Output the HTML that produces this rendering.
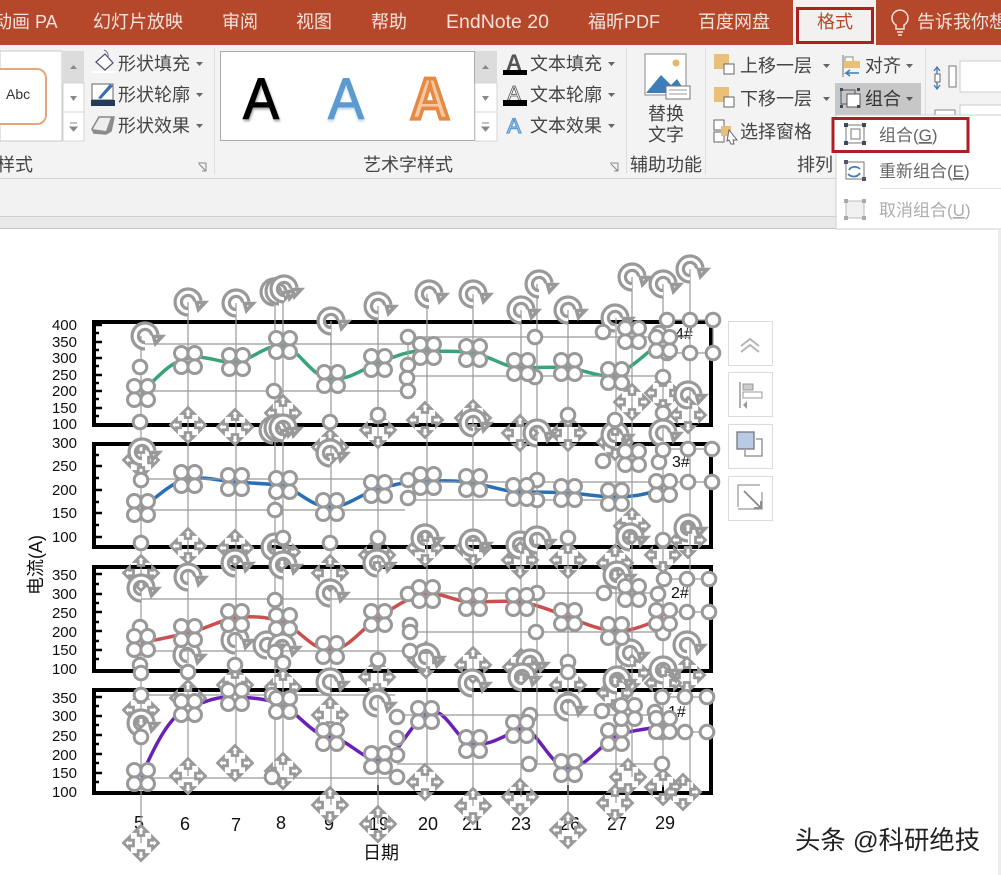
<!DOCTYPE html>
<html lang="zh">
<head>
<meta charset="utf-8">
<title>PowerPoint 组合</title>
<style>
html,body{margin:0;padding:0;background:#fff;width:1001px;height:875px;overflow:hidden}
svg{display:block}
text{font-family:"Liberation Sans","Noto Sans CJK SC",sans-serif}
.t{font-size:18px;fill:#f3e2dc}
.r{font-size:18px;fill:#444}
.n{font-size:15px;fill:#111;text-anchor:end}
.x{font-size:18px;fill:#111;text-anchor:middle}
.m{font-size:17px;fill:#666}
</style>
</head>
<body>
<svg width="1001" height="875" viewBox="0 0 1001 875" xmlns="http://www.w3.org/2000/svg">
<defs>
<circle id="c" r="6.8" fill="#fff" stroke="#999" stroke-width="3"/>
<g id="q"><use href="#c" x="-6.7" y="-6.7"/><use href="#c" x="6.7" y="-6.7"/><use href="#c" x="-6.7" y="6.7"/><use href="#c" x="6.7" y="6.7"/></g>
<g id="r">
<path d="M0 9.800A9.800 9.800 0 1 1 9.800-1" fill="none" stroke="#999" stroke-width="9.600"/>
<path d="M0 9.800A9.800 9.800 0 1 1 9.800-1" fill="none" stroke="#fff" stroke-width="3.200"/>
<path d="M8.500 .5 17 .5 10.500 7.500Z" fill="#fff" stroke="#999" stroke-width="3.600" stroke-linejoin="miter"/>
</g>
<path id="a" d="M0-17.500 6-11.500H2.800V-7.500H-2.800V-11.500H-6Z" fill="#fff" stroke="#999" stroke-width="2.800" stroke-linejoin="miter"/>
<g id="v"><use href="#a"/><use href="#a" transform="rotate(90)"/><use href="#a" transform="rotate(180)"/><use href="#a" transform="rotate(270)"/></g>
</defs>

<rect width="1001" height="875" fill="#fff"/>

<!-- ribbon -->
<rect width="1001" height="178" fill="#f3f3f3"/>
<rect y="178" width="1001" height="38" fill="#f2f2f2"/>
<rect y="178" width="1001" height="1" fill="#d4d4d4"/>
<rect y="216" width="1001" height="1" fill="#cfcfcf"/>
<rect y="217" width="1001" height="11" fill="#e9e9e9"/>
<rect y="228" width="1001" height="1" fill="#c4c4c4"/>
<rect width="1001" height="45" fill="#b5482b"/>
<text class="t" x="-6" y="28">动画 PA</text>
<text class="t" x="93" y="28">幻灯片放映</text>
<text class="t" x="222" y="28">审阅</text>
<text class="t" x="296" y="28">视图</text>
<text class="t" x="371" y="28">帮助</text>
<text class="t" x="446" y="28" style="font-size:19.500px">EndNote 20</text>
<text class="t" x="588" y="28">福昕PDF</text>
<text class="t" x="698" y="28">百度网盘</text>
<rect x="793" y="0" width="83" height="45" fill="#f3f1f0"/>
<rect x="797.500" y="8.500" width="75" height="34" fill="none" stroke="#ae1f24" stroke-width="3"/>
<text x="817" y="28" font-size="18" fill="#b5482b">格式</text>
<path d="M896 25a8 8 0 1 1 8 0v4h-8zM897 32h6M898 35h4" fill="none" stroke="#f3e2dc" stroke-width="1.500"/>
<text class="t" x="917" y="28">告诉我你想</text>

<!-- gallery 1 -->
<rect x="0" y="51" width="62" height="90" fill="#fff" stroke="#c8c8c8"/>
<rect x="-12" y="69" width="58" height="55" rx="9" fill="#fff" stroke="#e3a77c" stroke-width="2"/>
<text x="6" y="99" font-size="14" fill="#333">Abc</text>
<rect x="63" y="51" width="21" height="32" fill="#dcdcdc"/>
<rect x="63" y="83" width="21" height="29" fill="#fff" stroke="#d4d4d4"/>
<rect x="63" y="112" width="21" height="29" fill="#fff" stroke="#d4d4d4"/>
<path d="M70 69h7l-3.500-4zM70 96h7l-3.500 5z" fill="#888"/><path d="M70 123h7M70 127h7l-3.500 4z" fill="#888" stroke="#888"/>
<!-- shape tools -->
<path d="M96 62l9-8 8 9-8 7z" fill="#fff" stroke="#557" stroke-width="1.300"/><path d="M104 50c3 1 5 4 4 8" fill="none" stroke="#777"/>
<rect x="91" y="71" width="24" height="2" fill="#fff"/>
<rect x="92" y="84" width="21" height="16" fill="#fff" stroke="#666"/><path d="M98 98l12-14 3 2-12 13z" fill="#3f6fae"/>
<rect x="91" y="100" width="24" height="6" fill="#253a58"/>
<path d="M92 129l7-12h15l-3 14-5 3-12-1z" fill="#eee" stroke="#888" stroke-width="1.500"/><path d="M92 129l14 2 5-14 3 0-3 14-5 3-13-1z" fill="#8c8c8c"/>
<text class="r" x="118" y="70">形状填充</text>
<text class="r" x="118" y="101">形状轮廓</text>
<text class="r" x="118" y="132">形状效果</text>
<path d="M196 62h7l-3.500 4zM196 93h7l-3.500 4zM196 124h7l-3.500 4z" fill="#666"/>
<text x="-3" y="171" font-size="18" fill="#444">样式</text>
<path d="M198 163h8v8M199 164l7 7M206 167v4h-4" fill="none" stroke="#888"/>
<rect x="214" y="48" width="1" height="126" fill="#dedede"/>

<!-- wordart gallery -->
<rect x="220.500" y="51.500" width="254" height="89" fill="#fff" stroke="#aaa"/>
<rect x="475" y="51" width="22" height="32" fill="#dcdcdc"/>
<rect x="475" y="83" width="22" height="29" fill="#fff" stroke="#d4d4d4"/>
<rect x="475" y="112" width="22" height="29" fill="#fff" stroke="#d4d4d4"/>
<path d="M482 69h7l-3.500-4zM482 96h7l-3.500 5z" fill="#888"/><path d="M482 123h7M482 127h7l-3.500 4z" fill="#888" stroke="#888"/>
<text transform="translate(261,119) scale(1,1.080)" font-size="54" fill="#000" stroke="#000" stroke-width="1" text-anchor="middle" style="filter:drop-shadow(1px 2px 1px #aaa)">A</text>
<text transform="translate(346,119) scale(1,1.080)" font-size="54" fill="#5b9bd0" stroke="#5b9bd0" stroke-width="1" text-anchor="middle" style="filter:drop-shadow(0 2px 1px #c5d9ea)">A</text>
<text transform="translate(430,119) scale(1,1.080)" font-size="54" fill="#f7c8a0" stroke="#e58a44" stroke-width="3.500" font-weight="bold" text-anchor="middle">A</text>
<text x="363" y="171" font-size="18" fill="#444">艺术字样式</text>
<!-- text tools -->
<text x="514" y="70" font-size="22" fill="#555" text-anchor="middle" font-weight="bold">A</text><rect x="503" y="70" width="24" height="5" fill="#000"/>
<text x="514" y="100" font-size="20" fill="#fff" stroke="#555" stroke-width=".8" text-anchor="middle">A</text><rect x="503" y="100" width="24" height="6" fill="#000"/>
<text x="514" y="133" font-size="21" fill="#dcebf7" stroke="#5b9bd0" stroke-width="1.300" text-anchor="middle">A</text>
<text class="r" x="530" y="70">文本填充</text>
<text class="r" x="530" y="101">文本轮廓</text>
<text class="r" x="530" y="132">文本效果</text>
<path d="M608 62h7l-3.500 4zM608 93h7l-3.500 4zM608 124h7l-3.500 4z" fill="#666"/>
<path d="M610 163h8v8M611 164l7 7M618 167v4h-4" fill="none" stroke="#888"/>
<rect x="626" y="48" width="1" height="126" fill="#dedede"/>
<!-- alt text -->
<rect x="645" y="54" width="41" height="41" fill="#fff" stroke="#888"/>
<circle cx="676" cy="63" r="3.500" fill="#e6b865"/>
<path d="M646 93l15-18 10 10 6-6 9 14z" fill="#3f7cb8"/>
<rect x="666" y="86" width="24" height="13" fill="#fff" stroke="#777"/><path d="M669 90h18M669 94h18" stroke="#999"/>
<text class="r" x="648" y="120">替换</text>
<text class="r" x="648" y="141">文字</text>
<text class="r" x="630" y="171">辅助功能</text>
<rect x="705" y="48" width="1" height="126" fill="#dedede"/>
<!-- arrange -->
<rect x="714" y="54" width="15" height="15" fill="#e8c078"/><rect x="724" y="64" width="10" height="10" fill="#fff" stroke="#666"/>
<rect x="714" y="87" width="15" height="15" fill="#e8c078"/><rect x="724" y="97" width="10" height="10" fill="#fff" stroke="#666"/>
<rect x="714" y="120" width="10" height="10" fill="#fff" stroke="#666"/><rect x="714" y="132" width="10" height="10" fill="#fff" stroke="#666"/><rect x="721" y="126" width="10" height="10" fill="#e8c078"/><path d="M729 130l8 10-4 0 1 4-3 0-2-4-2 1z" fill="#fff" stroke="#666"/>
<text class="r" x="740" y="72">上移一层</text>
<text class="r" x="740" y="105">下移一层</text>
<text class="r" x="740" y="138">选择窗格</text>
<path d="M823 64h7l-3.500 4zM823 97h7l-3.500 4z" fill="#666"/>
<path d="M843 55v22" stroke="#777"/><rect x="845" y="57" width="8" height="6" fill="#fff" stroke="#888"/><rect x="844" y="61" width="16" height="7" fill="#e8c078"/><path d="M859 73h-13l4-3M846 73l4 3" fill="none" stroke="#3f7cb8" stroke-width="1.500"/>
<text class="r" x="865" y="72">对齐</text>
<path d="M906 64h7l-3.500 4z" fill="#666"/>
<rect x="835" y="83" width="86" height="33" fill="#c7c7c7"/>
<rect x="841" y="90" width="14" height="14" fill="none" stroke="#555"/><rect x="847" y="94" width="13" height="13" fill="#fff" stroke="#555"/>
<path d="M840 88h3v3h-3zM857 88h3v3h-3zM840 105h3v3h-3zM857 105h3v3h-3z" fill="#3b4b63"/>
<text x="865" y="105" font-size="18" fill="#333">组合</text>
<path d="M906 97h7l-3.500 4z" fill="#555"/>
<text class="r" x="797" y="171">排列</text>
<rect x="925" y="48" width="1" height="126" fill="#dedede"/>
<path d="M937 68v20M934 71l3-4 3 4M934 85l3 4 3-4" fill="none" stroke="#3f7cb8" stroke-width="1.300"/><rect x="935" y="74" width="5" height="8" fill="#fff" stroke="#666"/><rect x="949" y="66" width="7" height="21" fill="#fff" stroke="#777"/>
<rect x="960" y="61" width="42" height="31" fill="#fff" stroke="#ccc"/>
<rect x="960" y="105" width="42" height="20" fill="#fff" stroke="#ccc"/><rect x="935" y="110" width="20" height="8" fill="#fff" stroke="#888"/>

<!-- dropdown -->
<rect x="836" y="115" width="166" height="114" fill="#fff" stroke="#cfcfcf"/>
<rect x="833" y="118.500" width="135" height="33" fill="#fff" stroke="#ae1f24" stroke-width="3"/>
<rect x="846" y="125" width="18" height="18" fill="none" stroke="#777"/><rect x="851" y="129" width="9" height="10" fill="#fff" stroke="#777"/>
<path d="M844 123h4v4h-4zM862 123h4v4h-4zM844 141h4v4h-4zM862 141h4v4h-4z" fill="#3b4b63"/>
<text x="879" y="141" class="m">组合(<tspan text-decoration="underline">G</tspan>)</text>
<rect x="846" y="162" width="18" height="17" fill="none" stroke="#777"/>
<path d="M844 160h4v4h-4zM862 177h4v4h-4z" fill="#556"/>
<path d="M849 170c2-4 8-4 11-1M860 173c-3 5-9 4-12 1" fill="none" stroke="#3f7cb8" stroke-width="1.800"/>
<text x="879" y="177" class="m">重新组合(<tspan text-decoration="underline">E</tspan>)</text>
<rect x="880" y="188" width="122" height="1" fill="#e2e2e2"/>
<rect x="846" y="201" width="18" height="17" fill="#f0f0f0" stroke="#bbb"/>
<path d="M844 199h4v4h-4zM862 199h4v4h-4zM844 216h4v4h-4zM862 216h4v4h-4z" fill="#aaa"/>
<text x="879" y="216" font-size="17" fill="#adadad">取消组合(<tspan text-decoration="underline">U</tspan>)</text>

<!-- page edge -->
<rect x="998" y="229" width="3" height="646" fill="#ececec"/>

<!-- right floating buttons -->
<g fill="#fff" stroke="#dcdcdc">
<rect x="728.500" y="321.500" width="44" height="44"/>
<rect x="728.500" y="372.500" width="44" height="44"/>
<rect x="728.500" y="424.500" width="44" height="44"/>
<rect x="728.500" y="476.500" width="44" height="44"/>
</g>
<path d="M741 346l9-7 9 7M741 352l9-7 9 7" fill="none" stroke="#b5b5b5" stroke-width="2"/>
<path d="M740 382v26" stroke="#999" stroke-width="1.500"/><rect x="743" y="384" width="10" height="6" fill="#ccc" stroke="#999"/><rect x="743" y="392" width="19" height="6" fill="#fff" stroke="#999"/><path d="M747 401v8l-4-4z" fill="#999"/>
<rect x="737" y="432" width="17" height="17" fill="#b9cbe4" stroke="#777" stroke-width="1.300"/><path d="M756 439h6v17h-17v-6" fill="none" stroke="#888" stroke-width="1.300"/>
<path d="M738 507v-22h22M762 492v17h-24" fill="none" stroke="#aaa" stroke-width="1.500"/><path d="M744 491l17 17M761 501v7h-7" fill="none" stroke="#888" stroke-width="1.800"/>

<!-- chart ticks -->
<g stroke="#000" stroke-width="2.500">
<path d="M94 325h8M94 333h5M94 342h8M94 350h5M94 358h8M94 366h5M94 375h8M94 383h5M94 391h8M94 399h5M94 408h8M94 416h5"/>
<path d="M94 455h5M94 466h8M94 478h5M94 490h8M94 502h5M94 513h8M94 525h5M94 537h8"/>
<path d="M94 574h8M94 584h5M94 594h8M94 603h5M94 612h8M94 622h5M94 631h8M94 641h5M94 650h8M94 659h5"/>
<path d="M94 697h8M94 706h5M94 716h8M94 725h5M94 735h8M94 744h5M94 754h8M94 763h5M94 773h8M94 782h5"/>
</g>
<g fill="none" stroke="#000" stroke-width="4">
<rect x="94" y="322" width="617" height="103"/>
<rect x="94" y="444" width="617" height="103"/>
<rect x="94" y="567" width="617" height="104"/>
<rect x="94" y="690" width="617" height="103"/>
</g>
<path d="M378 785v8M568 785v8M236 791v2M663 785v8" stroke="#000" stroke-width="2"/>

<!-- labels -->
<g>
<text class="n" x="77" y="330">400</text><text class="n" x="77" y="347">350</text><text class="n" x="77" y="363">300</text><text class="n" x="77" y="380">250</text><text class="n" x="77" y="396">200</text><text class="n" x="77" y="413">150</text><text class="n" x="77" y="429">100</text>
<text class="n" x="77" y="448">300</text><text class="n" x="77" y="471">250</text><text class="n" x="77" y="495">200</text><text class="n" x="77" y="518">150</text><text class="n" x="77" y="542">100</text>
<text class="n" x="77" y="580">350</text><text class="n" x="77" y="599">300</text><text class="n" x="77" y="618">250</text><text class="n" x="77" y="637">200</text><text class="n" x="77" y="655">150</text><text class="n" x="77" y="674">100</text>
<text class="n" x="77" y="703">350</text><text class="n" x="77" y="721">300</text><text class="n" x="77" y="741">250</text><text class="n" x="77" y="760">200</text><text class="n" x="77" y="778">150</text><text class="n" x="77" y="797">100</text>
</g>
<g>
<text class="x" x="139" y="829">5</text><text class="x" x="185" y="830">6</text><text class="x" x="236" y="831">7</text><text class="x" x="281" y="829">8</text><text class="x" x="329" y="830">9</text><text class="x" x="379" y="830">19</text><text class="x" x="428" y="830">20</text><text class="x" x="472" y="830">21</text><text class="x" x="521" y="830">23</text><text class="x" x="570" y="830">26</text><text class="x" x="617" y="830">27</text><text class="x" x="665" y="829">29</text>
</g>
<text x="381" y="859" font-size="18" fill="#111" text-anchor="middle">日期</text>
<text transform="translate(42,565) rotate(-90)" font-size="18" fill="#111" text-anchor="middle">电流(A)</text>
<text x="675" y="339" font-size="16" fill="#111">4#</text>
<text x="672" y="467" font-size="16" fill="#111">3#</text>
<text x="671" y="598" font-size="16" fill="#111">2#</text>
<text x="668" y="717" font-size="16" fill="#111">1#</text>
<text x="795" y="849" font-size="25.400" fill="#222">头条 @科研绝技</text>

<!-- curves -->
<g fill="none" stroke-width="3.500" stroke-linejoin="round">
<path stroke="#3aa37a" d="M141 393C160 375 170 362 188 358S220 364 236 362 265 345 283 345C300 350 312 378 331 379S360 370 378 363 410 350 427 351 455 350 473 353 505 368 521 368 550 366 568 368 600 378 616 376C635 365 650 350 663 340"/>
<path stroke="#2a70b4" d="M141 508C155 500 170 482 188 479S220 481 235 482 265 484 283 485C300 492 312 507 330 507S360 494 378 489 410 481 427 481 455 480 473 483 505 492 521 492 550 492 568 493 600 497 616 497 650 494 663 488"/>
<path stroke="#c9504f" d="M141 643C155 640 170 637 188 633S220 620 235 618 265 616 283 622C300 630 312 650 330 650S360 630 378 618 410 596 426 594 455 602 473 602 505 600 520 602 550 610 568 617 600 630 615 631 650 624 663 617"/>
<path stroke="#6a20b4" d="M141 777C155 745 170 715 188 708S218 696 235 697 265 698 283 705C300 715 312 735 330 737S360 758 378 760 405 730 425 715 455 742 473 744 505 735 520 729 550 768 568 768 600 745 615 737 650 730 663 725"/>
</g>

<!-- guide lines -->
<g stroke="#999" stroke-width="1.200" fill="none">
<path d="M141 336V843M188 302V776M236 303V763M283 289V771M275 292V777M331 321V805M378 306V824M427 294V782M473 294V806M521 310V797M537 284V764M568 310V830M616 318V803M632 277V777M663 284V787M690 269V792M713 320V353M408 337V391"/>
<path d="M141 344H405M141 391H405M408 337H690M408 376H663M667 353H713M667 320H713"/>
<path d="M141 479H405M141 510H405M408 482H712M408 500H620M664 449H712"/>
<path d="M141 599H405M141 651H405M410 593H660M410 632H660M664 579H709M664 612H709"/>
<path d="M141 695H395M141 778H395M397 715H660M397 764H662M662 697H707M662 732H707"/>
</g>

<!-- move handles -->
<use href="#v" x="188" y="425"/><use href="#v" x="235" y="427"/><use href="#v" x="283" y="413"/><use href="#v" x="141" y="460"/><use href="#v" x="330" y="447"/><use href="#v" x="378" y="430"/><use href="#v" x="425" y="420"/><use href="#v" x="473" y="418"/><use href="#v" x="520" y="433"/><use href="#v" x="568" y="433"/><use href="#v" x="615" y="442"/><use href="#v" x="632" y="402"/><use href="#v" x="663" y="393"/><use href="#v" x="688" y="415"/>
<use href="#v" x="141" y="573"/><use href="#v" x="188" y="546"/><use href="#v" x="235" y="548"/><use href="#v" x="282" y="552"/><use href="#v" x="330" y="573"/><use href="#v" x="377" y="555"/><use href="#v" x="425" y="548"/><use href="#v" x="473" y="548"/><use href="#v" x="520" y="560"/><use href="#v" x="568" y="560"/><use href="#v" x="615" y="563"/><use href="#v" x="632" y="526"/><use href="#v" x="663" y="555"/><use href="#v" x="688" y="540"/>
<use href="#v" x="141" y="710"/><use href="#v" x="188" y="698"/><use href="#v" x="235" y="685"/><use href="#v" x="283" y="687"/><use href="#v" x="330" y="715"/><use href="#v" x="377" y="677"/><use href="#v" x="426" y="660"/><use href="#v" x="473" y="665"/><use href="#v" x="521" y="667"/><use href="#v" x="568" y="685"/><use href="#v" x="615" y="693"/><use href="#v" x="632" y="673"/><use href="#v" x="663" y="683"/><use href="#v" x="687" y="675"/>
<use href="#v" x="141" y="843"/><use href="#v" x="188" y="776"/><use href="#v" x="235" y="763"/><use href="#v" x="283" y="771"/><use href="#v" x="330" y="805"/><use href="#v" x="378" y="824"/><use href="#v" x="425" y="782"/><use href="#v" x="473" y="806"/><use href="#v" x="520" y="797"/><use href="#v" x="568" y="830"/><use href="#v" x="615" y="803"/><use href="#v" x="628" y="777"/><use href="#v" x="663" y="787"/><use href="#v" x="683" y="792"/>

<!-- rotation handles -->
<use href="#r" x="145" y="336"/><use href="#r" x="188" y="302"/><use href="#r" x="236" y="303"/><use href="#r" x="274" y="292"/><use href="#r" x="279" y="291"/><use href="#r" x="284" y="289"/><use href="#r" x="331" y="321"/><use href="#r" x="378" y="306"/><use href="#r" x="429" y="294"/><use href="#r" x="473" y="294"/><use href="#r" x="521" y="310"/><use href="#r" x="539" y="284"/><use href="#r" x="568" y="310"/><use href="#r" x="615" y="318"/><use href="#r" x="632" y="277"/><use href="#r" x="663" y="284"/><use href="#r" x="690" y="269"/>
<use href="#r" x="142" y="452"/><use href="#r" x="273" y="430"/><use href="#r" x="278" y="428"/><use href="#r" x="283" y="428"/><use href="#r" x="330" y="453"/><use href="#r" x="473" y="423"/><use href="#r" x="537" y="433"/><use href="#r" x="615" y="435"/><use href="#r" x="663" y="433"/><use href="#r" x="688" y="395"/>
<use href="#r" x="141" y="588"/><use href="#r" x="188" y="577"/><use href="#r" x="235" y="563"/><use href="#r" x="275" y="547"/><use href="#r" x="283" y="565"/><use href="#r" x="330" y="593"/><use href="#r" x="377" y="563"/><use href="#r" x="425" y="538"/><use href="#r" x="473" y="543"/><use href="#r" x="520" y="545"/><use href="#r" x="537" y="540"/><use href="#r" x="617" y="575"/><use href="#r" x="630" y="537"/><use href="#r" x="688" y="528"/>
<use href="#r" x="141" y="723"/><use href="#r" x="187" y="655"/><use href="#r" x="235" y="640"/><use href="#r" x="267" y="645"/><use href="#r" x="282" y="647"/><use href="#r" x="330" y="682"/><use href="#r" x="377" y="703"/><use href="#r" x="426" y="657"/><use href="#r" x="472" y="683"/><use href="#r" x="530" y="663"/><use href="#r" x="522" y="677"/><use href="#r" x="568" y="707"/><use href="#r" x="630" y="653"/><use href="#r" x="617" y="680"/><use href="#r" x="663" y="670"/><use href="#r" x="687" y="645"/>

<!-- single circles -->
<use href="#c" x="140" y="367"/><use href="#c" x="140" y="422"/><use href="#c" x="274" y="391"/><use href="#c" x="330" y="422"/><use href="#c" x="378" y="415"/><use href="#c" x="408" y="337"/><use href="#c" x="408" y="365"/><use href="#c" x="407" y="378"/><use href="#c" x="408" y="391"/><use href="#c" x="535" y="337"/><use href="#c" x="535" y="377"/><use href="#c" x="603" y="332"/><use href="#c" x="659" y="333"/><use href="#c" x="663" y="377"/><use href="#c" x="667" y="320"/><use href="#c" x="690" y="320"/><use href="#c" x="713" y="320"/><use href="#c" x="667" y="353"/><use href="#c" x="690" y="353"/><use href="#c" x="713" y="353"/><use href="#c" x="568" y="415"/><use href="#c" x="615" y="420"/><use href="#c" x="663" y="413"/>
<use href="#c" x="141" y="480"/><use href="#c" x="275" y="510"/><use href="#c" x="408" y="480"/><use href="#c" x="408" y="498"/><use href="#c" x="537" y="480"/><use href="#c" x="537" y="500"/><use href="#c" x="603" y="461"/><use href="#c" x="659" y="462"/><use href="#c" x="663" y="450"/><use href="#c" x="688" y="449"/><use href="#c" x="712" y="449"/><use href="#c" x="688" y="482"/><use href="#c" x="712" y="482"/>
<use href="#c" x="141" y="543"/><use href="#c" x="283" y="538"/><use href="#c" x="330" y="543"/><use href="#c" x="378" y="538"/><use href="#c" x="568" y="538"/><use href="#c" x="663" y="540"/>
<use href="#c" x="275" y="600"/><use href="#c" x="140" y="627"/><use href="#c" x="408" y="594"/><use href="#c" x="410" y="625"/><use href="#c" x="410" y="632"/><use href="#c" x="410" y="651"/><use href="#c" x="537" y="593"/><use href="#c" x="536" y="632"/><use href="#c" x="604" y="593"/><use href="#c" x="658" y="594"/><use href="#c" x="664" y="579"/><use href="#c" x="687" y="579"/><use href="#c" x="709" y="579"/><use href="#c" x="687" y="612"/><use href="#c" x="709" y="612"/><use href="#c" x="663" y="633"/>
<use href="#c" x="140" y="665"/><use href="#c" x="141" y="673"/><use href="#c" x="188" y="672"/><use href="#c" x="235" y="665"/><use href="#c" x="275" y="652"/><use href="#c" x="283" y="663"/><use href="#c" x="378" y="660"/><use href="#c" x="568" y="662"/><use href="#c" x="568" y="672"/>
<use href="#c" x="141" y="695"/><use href="#c" x="141" y="737"/><use href="#c" x="272" y="695"/><use href="#c" x="272" y="777"/><use href="#c" x="397" y="717"/><use href="#c" x="397" y="738"/><use href="#c" x="397" y="755"/><use href="#c" x="397" y="777"/><use href="#c" x="530" y="715"/><use href="#c" x="529" y="764"/><use href="#c" x="602" y="711"/><use href="#c" x="655" y="712"/><use href="#c" x="662" y="697"/><use href="#c" x="685" y="697"/><use href="#c" x="707" y="697"/><use href="#c" x="662" y="732"/><use href="#c" x="685" y="732"/><use href="#c" x="707" y="732"/><use href="#c" x="662" y="764"/>

<!-- clusters -->
<use href="#q" x="141" y="393"/><use href="#q" x="188" y="360"/><use href="#q" x="236" y="362"/><use href="#q" x="283" y="345"/><use href="#q" x="331" y="379"/><use href="#q" x="378" y="363"/><use href="#q" x="427" y="351"/><use href="#q" x="473" y="353"/><use href="#q" x="521" y="367"/><use href="#q" x="568" y="367"/><use href="#q" x="615" y="376"/><use href="#q" x="632" y="335"/><use href="#q" x="663" y="344"/>
<use href="#q" x="141" y="508"/><use href="#q" x="188" y="479"/><use href="#q" x="235" y="482"/><use href="#q" x="283" y="485"/><use href="#q" x="330" y="507"/><use href="#q" x="378" y="489"/><use href="#q" x="427" y="481"/><use href="#q" x="473" y="483"/><use href="#q" x="520" y="492"/><use href="#q" x="568" y="493"/><use href="#q" x="615" y="497"/><use href="#q" x="632" y="458"/><use href="#q" x="663" y="488"/>
<use href="#q" x="141" y="643"/><use href="#q" x="188" y="633"/><use href="#q" x="235" y="618"/><use href="#q" x="283" y="622"/><use href="#q" x="330" y="650"/><use href="#q" x="378" y="618"/><use href="#q" x="426" y="594"/><use href="#q" x="473" y="602"/><use href="#q" x="520" y="602"/><use href="#q" x="568" y="617"/><use href="#q" x="615" y="631"/><use href="#q" x="632" y="593"/><use href="#q" x="663" y="617"/>
<use href="#q" x="141" y="777"/><use href="#q" x="188" y="708"/><use href="#q" x="235" y="697"/><use href="#q" x="283" y="705"/><use href="#q" x="330" y="737"/><use href="#q" x="378" y="760"/><use href="#q" x="425" y="715"/><use href="#q" x="473" y="744"/><use href="#q" x="520" y="729"/><use href="#q" x="568" y="768"/><use href="#q" x="615" y="737"/><use href="#q" x="628" y="712"/><use href="#q" x="663" y="725"/>
</svg>
</body>
</html>
